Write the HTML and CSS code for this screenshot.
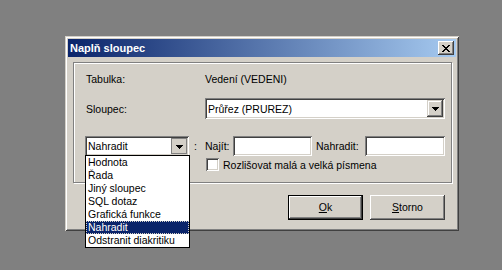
FILE: index.html
```html
<!DOCTYPE html>
<html lang="cs">
<head>
<meta charset="utf-8">
<title>Naplň sloupec</title>
<link rel="stylesheet" href="styles.css">
</head>
<body>
<div class="dialog">
  <div class="titlebar">
    <span class="title">Naplň sloupec</span>
    <button class="close" type="button" aria-label="Zavřít">
      <svg width="8" height="7" viewBox="0 0 8 7" shape-rendering="crispEdges">
        <rect x="0" y="0" width="2" height="1"/><rect x="6" y="0" width="2" height="1"/>
        <rect x="1" y="1" width="2" height="1"/><rect x="5" y="1" width="2" height="1"/>
        <rect x="2" y="2" width="4" height="1"/>
        <rect x="3" y="3" width="2" height="1"/>
        <rect x="2" y="4" width="4" height="1"/>
        <rect x="1" y="5" width="2" height="1"/><rect x="5" y="5" width="2" height="1"/>
        <rect x="0" y="6" width="2" height="1"/><rect x="6" y="6" width="2" height="1"/>
      </svg>
    </button>
  </div>
  <div class="body">
    <div class="group">
      <div class="row row-info">
        <span class="label">Tabulka:</span>
        <span class="value">Vedení (VEDENI)</span>
      </div>
      <div class="row row-col">
        <span class="label">Sloupec:</span>
        <div class="combo combo-wide">
          <span class="combo-text">Průřez (PRUREZ)</span>
          <span class="arrow"><svg width="7" height="4" viewBox="0 0 7 4" shape-rendering="crispEdges"><rect x="0" y="0" width="7" height="1"/><rect x="1" y="1" width="5" height="1"/><rect x="2" y="2" width="3" height="1"/><rect x="3" y="3" width="1" height="1"/></svg></span>
        </div>
      </div>
      <div class="row row-replace">
        <div class="combo combo-mode">
          <span class="combo-text">Nahradit</span>
          <span class="arrow pressed"><svg width="7" height="4" viewBox="0 0 7 4" shape-rendering="crispEdges"><rect x="0" y="0" width="7" height="1"/><rect x="1" y="1" width="5" height="1"/><rect x="2" y="2" width="3" height="1"/><rect x="3" y="3" width="1" height="1"/></svg></span>
          <ul class="droplist">
            <li>Hodnota</li>
            <li>Řada</li>
            <li>Jiný sloupec</li>
            <li>SQL dotaz</li>
            <li>Grafická funkce</li>
            <li class="selected">Nahradit</li>
            <li>Odstranit diakritiku</li>
          </ul>
        </div>
        <span class="colon">:</span>
        <span class="lbl-find">Najít:</span>
        <span class="edit edit-find"></span>
        <span class="lbl-repl">Nahradit:</span>
        <span class="edit edit-repl"></span>
      </div>
      <div class="row row-check">
        <span class="checkbox"></span>
        <span class="check-label">Rozlišovat malá a velká písmena</span>
      </div>
    </div>
    <div class="buttons">
      <button class="btn btn-default" type="button"><span class="btn-face"><u>O</u>k</span></button>
      <button class="btn" type="button"><span class="btn-face"><u>S</u>torno</span></button>
    </div>
  </div>
</div>
</body>
</html>
```
FILE: styles.css
```css
html, body {
  margin: 0;
  padding: 0;
}
body {
  width: 502px;
  height: 270px;
  overflow: hidden;
  background: #808080;
  font-family: "Liberation Sans", Arial, sans-serif;
  font-size: 10.5px;
  color: #000;
}
.dialog {
  margin: 36px 0 0 65px;
  width: 394px;
  height: 195px;
  box-sizing: border-box;
  padding: 3px;
  background: #d4d0c8;
  box-shadow: inset 1px 1px #d4d0c8, inset -1px -1px #404040, inset 2px 2px #fff, inset -2px -2px #808080;
}
.titlebar {
  height: 18px;
  background: linear-gradient(to right, #0a246a, #a6caf0);
  display: flex;
  align-items: center;
  justify-content: space-between;
  padding: 0 2px;
}
.title {
  color: #fff;
  font-weight: bold;
  font-size: 11px;
  line-height: 18px;
}
.close {
  width: 16px;
  height: 14px;
  padding: 0;
  margin: 0;
  border: 0;
  background: #d4d0c8;
  box-shadow: inset -1px -1px #404040, inset 1px 1px #fff, inset -2px -2px #808080;
  display: flex;
  align-items: center;
  justify-content: center;
}
.close svg {
  fill: #000;
  display: block;
}
.body {
  padding: 5px 3px 0 5px;
}
.group {
  box-sizing: border-box;
  width: 379px;
  height: 121px;
  padding-top: 5px;
  border: 1px solid #808080;
  box-shadow: inset 1px 1px #fff, 1px 1px #fff;
}
.row {
  display: flex;
  align-items: center;
}
.label {
  width: 119px;
  padding-left: 12px;
  flex: none;
}
.row-info {
  height: 20px;
  margin-top: 1px;
}
.row-col {
  height: 21px;
  margin-top: 9px;
}
.combo {
  position: relative;
  background: #fff;
  box-sizing: border-box;
  box-shadow: inset 1px 1px #808080, inset -1px -1px #fff, inset 2px 2px #404040, inset -2px -2px #d4d0c8;
  display: flex;
  align-items: center;
  padding: 2px;
}
.combo-wide {
  width: 240px;
  height: 21px;
}
.combo-text {
  flex: 1;
  padding-left: 1px;
  line-height: 16px;
}
.arrow {
  width: 16px;
  height: 17px;
  flex: none;
  background: #d4d0c8;
  box-shadow: inset -1px -1px #404040, inset 1px 1px #d4d0c8, inset -2px -2px #808080, inset 2px 2px #fff;
  display: flex;
  align-items: center;
  justify-content: center;
}
.arrow svg {
  fill: #000;
  display: block;
}
.arrow.pressed {
  box-shadow: inset 1px 1px #808080, inset -1px -1px #808080;
}
.arrow.pressed svg {
  margin: 2px 0 0 1px;
}
.row-replace {
  height: 20px;
  margin-top: 17px;
  padding-left: 11px;
}
.combo-mode {
  width: 104px;
  height: 20px;
  flex: none;
}
.combo-mode .arrow {
  height: 16px;
}
.droplist {
  position: absolute;
  left: 0;
  top: 19px;
  width: 105px;
  margin: 0;
  padding: 0;
  list-style: none;
  background: #fff;
  border: 1px solid #000;
  box-sizing: border-box;
  z-index: 5;
}
.droplist li {
  height: 13px;
  line-height: 13px;
  padding-left: 2px;
  white-space: nowrap;
}
.droplist li.selected {
  background: #0a246a;
  color: #fff;
  outline: 1px dotted #d4d0c8;
  outline-offset: -1px;
}
.colon {
  width: 16px;
  flex: none;
  padding-left: 5px;
  box-sizing: border-box;
}
.lbl-find {
  width: 28px;
  flex: none;
}
.edit {
  display: block;
  height: 20px;
  background: #fff;
  box-sizing: border-box;
  box-shadow: inset 1px 1px #808080, inset -1px -1px #fff, inset 2px 2px #404040, inset -2px -2px #d4d0c8;
  flex: none;
}
.edit-find {
  width: 79px;
}
.lbl-repl {
  width: 49px;
  margin-left: 4px;
  flex: none;
}
.edit-repl {
  width: 80px;
}
.row-check {
  height: 13px;
  margin-top: 2px;
  padding-left: 132px;
}
.checkbox {
  width: 13px;
  height: 13px;
  box-sizing: border-box;
  background: #fff;
  box-shadow: inset 1px 1px #808080, inset -1px -1px #fff, inset 2px 2px #404040, inset -2px -2px #d4d0c8;
  flex: none;
}
.check-label {
  margin-left: 4px;
}
.buttons {
  display: flex;
  justify-content: flex-end;
  gap: 7px;
  margin-top: 12px;
  padding-right: 8px;
}
.btn {
  width: 75px;
  height: 25px;
  padding: 0;
  margin: 0;
  border: 0;
  background: #d4d0c8;
  font: inherit;
  color: #000;
  box-shadow: inset -1px -1px #404040, inset 1px 1px #fff, inset -2px -2px #808080, inset 2px 2px #d4d0c8;
  display: flex;
  align-items: center;
  justify-content: center;
}
.btn-face {
  line-height: 13px;
}
.btn-default {
  border: 1px solid #000;
  box-sizing: border-box;
}
```
